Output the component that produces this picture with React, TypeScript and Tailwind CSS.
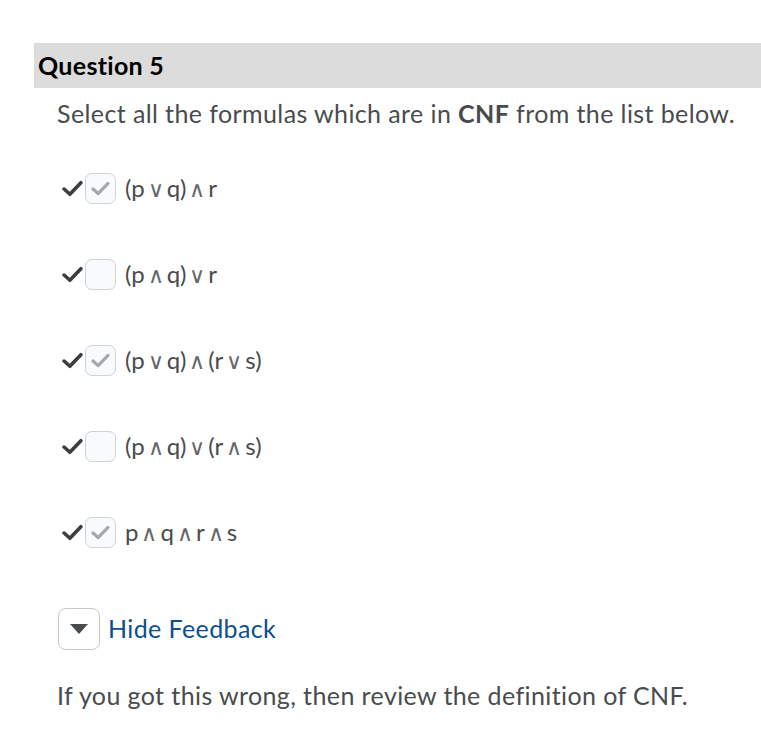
import React from 'react';

const items = [
  { text: '(p∨q)∧r', checked: true },
  { text: '(p∧q)∨r', checked: false },
  { text: '(p∨q)∧(r∨s)', checked: true },
  { text: '(p∧q)∨(r∧s)', checked: false },
  { text: 'p∧q∧r∧s', checked: true },
];

function Tick({ className }: { className?: string }) {
  return (
    <svg viewBox="0 0 20 16" className={className} fill="none">
      <path d="M2 8.5 L7.5 13.5 L18 2.5" stroke="currentColor" strokeWidth="3.4" strokeLinecap="round" strokeLinejoin="round" />
    </svg>
  );
}

function Formula({ text }: { text: string }) {
  return (
    <span className="ml-[9px] text-[24px] text-[#494c4e]">
      {text.split('').map((ch, i) =>
        ch === '∧' || ch === '∨' ? (
          <span
            key={i}
            className="mx-[3px] text-[22px] font-extralight text-[#65686b]"
            style={{ fontFamily: '"DejaVu Sans", sans-serif' }}
          >
            {ch}
          </span>
        ) : (
          <span key={i}>{ch}</span>
        )
      )}
    </span>
  );
}

function Row({ text, checked }: { text: string; checked: boolean }) {
  return (
    <div className="flex h-[86px] items-center">
      <Tick className="ml-[5px] h-[17px] w-[21px] text-[#3c3e40]" />
      <div className="ml-[2px] flex h-[31px] w-[31px] items-center justify-center rounded-[7px] border border-[#cdd3d8] bg-[#f9fafc]">
        {checked && <Tick className="h-[15px] w-[19px] text-[#a6a8aa]" />}
      </div>
      <Formula text={text} />
    </div>
  );
}

export default function App() {
  return (
    <div className="min-h-screen bg-white pl-[34px] pt-[43px]" style={{ fontFamily: 'Lato, "Noto Sans", sans-serif' }}>
      {/* Question header */}
      <div className="flex h-[45px] items-center bg-[#dcdcdc] pl-[4px]">
        <h2 className="text-[25px] font-bold tracking-[0.3px] text-black">Question 5</h2>
      </div>

      <div className="pl-[23px]">
        <p className="mt-[8px] text-[25px] leading-[34px] tracking-[0.4px] text-[#494c4e]">
          Select all the formulas which are in <b className="font-bold">CNF</b> from the list below.
        </p>

        <div className="mt-[15px]">
          {items.map((it) => (
            <Row key={it.text} text={it.text} checked={it.checked} />
          ))}
        </div>

        {/* Feedback toggle */}
        <div className="mt-[33px] flex items-center">
          <button className="ml-px flex h-[42px] w-[42px] items-center justify-center rounded-[8px] border border-[#c4c7ca] bg-white">
            <svg viewBox="0 0 18 10" className="h-[10px] w-[18px]">
              <path d="M0 0 H18 L9 10 Z" fill="#494c4e" />
            </svg>
          </button>
          <a className="ml-[8px] text-[25px] tracking-[0.4px] text-[#0b4f8e]" href="#">
            Hide Feedback
          </a>
        </div>

        <p className="mt-[28px] text-[25px] leading-[34px] tracking-[0.4px] text-[#494c4e]">
          If you got this wrong, then review the definition of CNF.
        </p>
      </div>
    </div>
  );
}
